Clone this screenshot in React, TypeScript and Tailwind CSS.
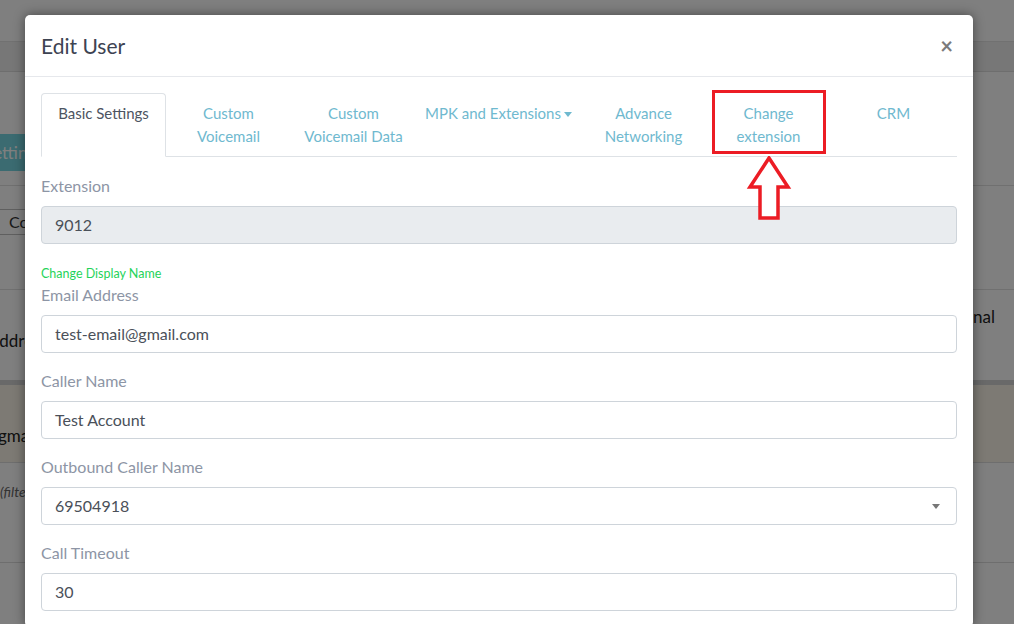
const tabs = ["Custom Voicemail", "Custom Voicemail Data"];

function Field({
  label,
  value,
  disabled,
  select,
}: {
  label: string;
  value: string;
  disabled?: boolean;
  select?: boolean;
}) {
  return (
    <div className="mb-4">
      <div className="mb-2 text-[16px] leading-6 text-[#8d95a5]">{label}</div>
      <div
        className={`flex h-[38px] items-center justify-between rounded-[4px] border border-[#ced4da] px-[13px] text-[16px] text-[#4a5059] ${
          disabled ? "bg-[#e9ecef]" : "bg-white"
        }`}
      >
        <span>{value}</span>
        {select ? (
          <span className="mr-[3px] h-0 w-0 border-x-[4px] border-t-[5px] border-x-transparent border-t-[#777]" />
        ) : null}
      </div>
    </div>
  );
}

function Arrow() {
  return (
    <svg width="46" height="66" viewBox="0 0 46 66" className="block">
      <path
        d="M23 2 L42 31 L32 31 L32 62 L14 62 L14 31 L4 31 Z"
        fill="white"
        stroke="#ec1c24"
        strokeWidth="3.5"
        strokeLinejoin="miter"
      />
    </svg>
  );
}

export default function App() {
  return (
    <div className="relative h-[624px] w-[1014px] overflow-hidden bg-white font-['Lato',_sans-serif]">
      {/* page behind the dialog */}
      <div className="flex flex-col">
        <div className="h-[42px] border-b border-[#e2e2e2]" />
        <div className="h-[30px] border-b border-[#dcdcdc] bg-[#efefef]" />
        <div className="h-[114px] border-b border-[#e0e0e0] pt-[62px]">
          <div className="ml-[-26px] flex h-[37px] w-[120px] items-center rounded bg-[#77d6e2] pl-[10px] text-[17px] text-white">
            Settings
          </div>
        </div>
        <div className="h-[104px] border-b border-[#e0e0e0] pt-[23px]">
          <div className="ml-[-4px] flex h-[26px] w-[40px] items-center border border-[#bfbfbf] pl-[12px] text-[16px] text-[#333]">
            Co
          </div>
        </div>
        <div className="flex h-[95px] justify-between border-b-[5px] border-[#d2d2d2]">
          <div className="ml-[-12px] pt-[38px] text-[17px] text-[#222]">Addre</div>
          <div className="mr-[19px] pt-[14px] text-[17px] text-[#222]">Personal</div>
        </div>
        <div className="h-[78px] border-b border-[#dcdcdc] bg-[#faf5e8] pt-[38px] text-[17px] text-[#222]">
          <span className="ml-[-2px]">gma</span>
        </div>
        <div className="h-[100px] border-b border-[#dcdcdc] pt-[18px] text-[14px] italic text-[#666]">
          <span>(filte</span>
        </div>
      </div>
      <div className="absolute inset-0 bg-black/50" />

      {/* dialog */}
      <div className="absolute left-[25px] top-[15px] w-[948px] rounded-[5px] bg-white shadow-[0_0_12px_rgba(0,0,0,0.45)]">
        <div className="flex h-[62px] items-center justify-between border-b border-[#e6e8ec] px-[16px]">
          <h2 className="text-[21px] font-normal text-[#3d4352]">Edit User</h2>
          <span className="mr-[4px] text-[22px] font-bold leading-none text-[#7b7b7b]">×</span>
        </div>
        <div className="px-[16px] pt-[16px]">
          <div className="relative flex border-b border-[#dee2e6] text-[15px] leading-[23px]">
            <div className="mb-[-1px] w-[125px] rounded-t-[4px] border border-b-white border-[#dee2e6] px-2 pt-[8px] text-center text-[#4d5461]">
              Basic Settings
            </div>
            {tabs.map((t) => (
              <div key={t} className="w-[125px] px-2 pb-[8px] pt-[9px] text-center text-[#6fb9cf]">
                {t}
              </div>
            ))}
            <div className="flex w-[165px] justify-center gap-[3px] pt-[9px] text-[#6fb9cf]">
              <span>MPK and Extensions</span>
              <span className="mt-[10px] h-0 w-0 border-x-[4px] border-t-[5px] border-x-transparent border-t-[#6fb9cf]" />
            </div>
            <div className="w-[125px] px-2 pt-[9px] text-center text-[#6fb9cf]">Advance Networking</div>
            <div className="relative w-[125px] px-2 pt-[9px] text-center text-[#6fb9cf]">
              Change extension
              <div className="absolute left-[6px] top-[-3px] h-[64px] w-[114px] border-[3px] border-[#ec1c24]" />
              <div className="absolute left-[40px] top-[63px]">
                <Arrow />
              </div>
            </div>
            <div className="w-[125px] px-2 pt-[9px] text-center text-[#6fb9cf]">CRM</div>
          </div>

          <div className="pt-[17px]">
            <div className="mb-2 text-[16px] leading-6 text-[#8d95a5]">Extension</div>
            <div className="flex h-[38px] items-center rounded-[4px] border border-[#ced4da] bg-[#e9ecef] px-[13px] text-[16px] text-[#4a5059]">
              9012
            </div>
            <div className="mt-[21px] text-[12.5px] leading-[18px] text-[#1fd35a]">Change Display Name</div>
            <Field label="Email Address" value="test-email@gmail.com" />
            <Field label="Caller Name" value="Test Account" />
            <Field label="Outbound Caller Name" value="69504918" select />
            <Field label="Call Timeout" value="30" />
          </div>
        </div>
      </div>
    </div>
  );
}
